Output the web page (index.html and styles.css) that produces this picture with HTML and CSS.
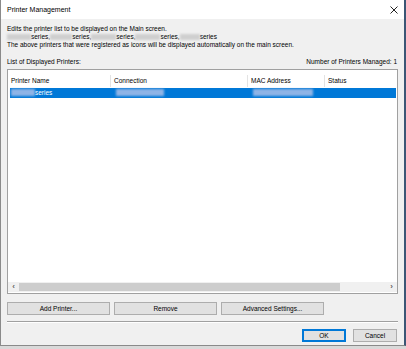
FILE: index.html
```html
<!DOCTYPE html>
<html lang="en">
<head>
    <meta charset="UTF-8">
    <title>Printer Management</title>
    <link rel="stylesheet" href="styles.css">
</head>
<body>

<div class="window">
    <div class="titlebar">
        <span class="title">Printer Management</span>
        <svg class="close" width="8" height="8" viewBox="0 0 8 8">
            <path d="M0.5 0.5 L7.5 7.5 M7.5 0.5 L0.5 7.5" stroke="#222" stroke-width="1" fill="none"/>
        </svg>
    </div>

    <div class="content">
        <div class="intro">
            <p>Edits the printer list to be displayed on the Main screen.</p>
            <p>
                <span class="blur w24"></span>series,<span class="blur w22"></span>series,<span class="blur w25"></span>series,<span class="blur w25"></span>series,<span class="blur w20"></span>series
            </p>
            <p>The above printers that were registered as icons will be displayed automatically on the main screen.</p>
        </div>

        <div class="list-head">
            <span>List of Displayed Printers:</span>
            <span>Number of Printers Managed: 1</span>
        </div>

        <div class="listbox">
            <div class="cols header">
                <div class="col c-name">Printer Name</div>
                <div class="col c-conn">Connection</div>
                <div class="col c-mac">MAC Address</div>
                <div class="col c-status">Status</div>
            </div>
            <div class="cols row selected">
                <div class="col c-name"><span class="blur sel w24"></span>series</div>
                <div class="col c-conn"><span class="blur sel w48"></span></div>
                <div class="col c-mac"><span class="blur sel w60"></span></div>
                <div class="col c-status"></div>
            </div>
            <div class="list-space"></div>
            <div class="hscroll">
                <span class="arrow">&#8249;</span>
                <div class="track"><div class="thumb"></div></div>
                <span class="arrow">&#8250;</span>
            </div>
        </div>

        <div class="actions">
            <button class="btn">Add Printer...</button>
            <button class="btn">Remove</button>
            <button class="btn">Advanced Settings...</button>
        </div>

        <div class="separator"></div>

        <div class="footer">
            <button class="btn small default">OK</button>
            <button class="btn small">Cancel</button>
        </div>
    </div>
</div>

</body>
</html>
```

FILE: styles.css
```css
html, body {
    margin: 0;
    height: 100%;
}
body {
    background-color: #d9d9d9;
    font-family: 'Liberation Sans', Arial, sans-serif;
    color: #000;
    font-size: 6.5px;
}
.window {
    width: 403px;
    height: 345px;
    background-color: #f0f0f0;
    border-left: 1px solid #8a8a8a;
    border-right: 2px solid #3b5675; /* desktop strip behind */
    border-bottom: 1px solid #8a8a8a;
    display: flex;
    flex-direction: column;
}
.titlebar {
    height: 19px;
    background-color: white;
    display: flex;
    align-items: center;
    justify-content: space-between;
    padding: 0 6px 0 6px;
    flex-shrink: 0;
}
.title {
    font-size: 7px;
}
.close {
    display: block;
}
.content {
    flex-grow: 1;
    padding: 6px 5px 0 6px;
    display: flex;
    flex-direction: column;
}
.intro p {
    margin: 0;
    line-height: 7.8px;
    white-space: nowrap;
}
.blur {
    display: inline-block;
    height: 6px;
    vertical-align: -1px;
    background-color: #cfcfcf;
    filter: blur(1px);
}
.blur.sel {
    background-color: #8fb4e6;
    height: 7px;
}
.w20 { width: 20px; }
.w22 { width: 22px; }
.w24 { width: 24px; }
.w25 { width: 25px; }
.w48 { width: 48px; }
.w60 { width: 60px; }

.list-head {
    display: flex;
    justify-content: space-between;
    align-items: flex-end;
    margin-top: 9px;
    height: 8px;
    padding-right: 2px;
}
.listbox {
    margin-top: 4px;
    height: 225px;
    box-sizing: border-box;
    width: 391px;
    background-color: white;
    border: 1px solid #a0a0a0;
    display: flex;
    flex-direction: column;
}
.cols {
    display: flex;
}
.header {
    height: 17px;
    align-items: flex-end;
}
.header .col {
    height: 12px;
    line-height: 12px;
    border-right: 1px solid #e3e3e3;
    padding-left: 3px;
    padding-bottom: 2px;
    box-sizing: border-box;
}
.header .col:last-child {
    border-right: none;
}
.col {
    flex-shrink: 0;
    white-space: nowrap;
}
.c-name { width: 103px; }
.c-conn { width: 137px; }
.c-mac { width: 77px; }
.c-status { flex-grow: 1; }
.row {
    height: 10px;
    line-height: 10px;
    margin: 1px 1px 0 2px;
}
.row .col {
    padding-left: 1px;
    box-sizing: border-box;
}
.row .c-conn, .row .c-mac {
    padding-left: 3px;
}
.selected {
    background-color: #0078d7;
    color: white;
}
.list-space {
    flex-grow: 1;
}
.hscroll {
    height: 10px;
    display: flex;
    align-items: center;
    background-color: #f0f0f0;
    margin: 0 0 1px 0;
}
.arrow {
    width: 11px;
    text-align: center;
    font-size: 8px;
    font-weight: bold;
    color: #606060;
    line-height: 10px;
}
.track {
    flex-grow: 1;
    height: 8px;
    padding-right: 46px;
}
.thumb {
    height: 100%;
    background-color: #cdcdcd;
}
.actions {
    display: flex;
    gap: 4px;
    margin-top: 8px;
}
.btn {
    font-family: 'Liberation Sans', Arial, sans-serif;
    font-size: 6.5px;
    color: #000;
    background-color: #e1e1e1;
    border: 1px solid #adadad;
    width: 103px;
    height: 13px;
    padding: 0;
    margin: 0;
}
.separator {
    margin-top: 6px;
    height: 0;
    width: 391px;
    border-top: 1px solid #a0a0a0;
    border-bottom: 1px solid white;
}
.footer {
    display: flex;
    justify-content: flex-end;
    gap: 7px;
    margin-top: 6px;
    padding-right: 2px;
}
.btn.small {
    width: 44px;
}
.btn.default {
    border: 1px solid #0078d7;
    box-shadow: inset 0 0 0 1px #0078d7;
}
```
